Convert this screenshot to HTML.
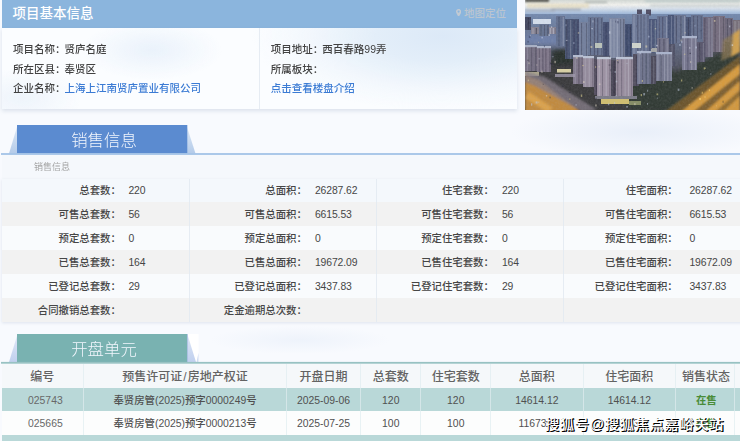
<!DOCTYPE html>
<html lang="zh-CN">
<head>
<meta charset="utf-8">
<title>项目基本信息</title>
<style>
*{box-sizing:border-box;margin:0;padding:0}
html,body{width:740px;height:441px;overflow:hidden;background:#f8fafe}
body{font-family:"Liberation Sans","Noto Sans CJK SC",sans-serif;color:#333;font-size:10.4px;line-height:1}
#root{position:relative;width:740px;height:441px;overflow:hidden;background:radial-gradient(ellipse 130px 26px at 640px 132px,#e9eff9 0%,rgba(248,250,254,0) 100%),radial-gradient(ellipse 90px 14px at 300px 340px,#eef3fb 0%,rgba(248,250,254,0) 100%),#f8fafe}
#in{position:absolute;left:-10px;top:-10px;width:760px;height:461px;filter:blur(0.45px)}
#in2{position:absolute;left:10px;top:10px;width:740px;height:441px}
.abs{position:absolute;white-space:nowrap}
.hdr{left:1.5px;top:0;width:515.5px;height:27.5px;background:#8bb5dd}
.hdr .t{left:11px;top:0;line-height:27px;font-size:13.5px;color:#fff;font-weight:500}
.hdr .map{left:462.5px;top:0;line-height:27px;font-size:10.5px;color:#bbc5d0;font-weight:500}
.panel{left:1.5px;top:27.5px;width:515px;height:81.2px;background:radial-gradient(ellipse 190px 75px at 440px 8px,#dce9f7 0%,#e3eef9 35%,rgba(240,246,252,.6) 75%,rgba(250,252,254,0) 100%),radial-gradient(ellipse 70px 30px at 150px 22px,#eaf2fb 0%,rgba(250,252,254,0) 100%),radial-gradient(ellipse 60px 30px at 20px 70px,#eef4fb 0%,rgba(250,252,254,0) 100%),#fbfdff;box-shadow:0 1.5px 4px rgba(120,140,170,.22)}
.panel .vd{left:257px;top:0;width:1px;height:81px;background:#e6ecf3}
.info{font-size:10.5px;color:#424242;line-height:14px;font-weight:500}
.info i{font-style:normal;margin-right:-0.9px}
.info a{color:#3b7bd4;text-decoration:none}
.tab{left:19px;width:170px;height:28px;color:#f2f6fd;font-size:16.4px;text-align:center;line-height:28px;font-weight:300}
.lab{text-align:right;width:110px}
.row{left:0;width:748px}
.lab,.val{font-size:10.4px;color:#464646;font-weight:500;line-height:24px}
.val{letter-spacing:-0.1px}
.cd{top:0;width:1px;background:rgba(224,236,240,.7)}
.sd{top:0;width:1px;background:rgba(225,232,240,.8)}
.th{font-size:12px;font-weight:500;color:#636363;text-align:center}
.td{font-size:10.4px;color:#505050;text-align:center;font-weight:500}
.g{color:#4a8c38;font-weight:700;position:relative;left:1.5px}
.wm{left:545.2px;top:413.6px;font-size:14px;line-height:20px;color:#fff;font-weight:500;letter-spacing:0.9px;text-shadow:1.1px 1.1px 0.2px #000,0.6px 0.6px 0 #000}
</style>
</head>
<body>
<div id="root"><div id="in"><div id="in2">
  <div class="abs hdr">
    <div class="abs t">项目基本信息</div>
    <svg class="abs" style="left:454px;top:8.5px" width="5.2" height="7.8" viewBox="0 0 12 18"><path d="M6 0C2.7 0 0 2.7 0 6c0 4.5 6 12 6 12s6-7.500 6-12c0-3.300-2.700-6-6-6zm0 8.500A2.500 2.500 0 1 1 6 3.500a2.500 2.500 0 0 1 0 5z" fill="#c2cad3"/></svg>
    <div class="abs map">地图定位</div>
  </div>
  <div class="abs panel">
    <div class="abs vd"></div>
    <div class="abs info" style="left:11.5px;top:14.8px">项目名称<i>：</i>贤庐名庭</div>
    <div class="abs info" style="left:11.5px;top:34.6px">所在区县<i>：</i>奉贤区</div>
    <div class="abs info" style="left:11.5px;top:53.6px">企业名称<i>：</i><a>上海上江南贤庐置业有限公司</a></div>
    <div class="abs info" style="left:269.2px;top:14.8px">项目地址<i>：</i>西百春路99弄</div>
    <div class="abs info" style="left:269.2px;top:34.6px">所属板块<i>：</i></div>
    <div class="abs info" style="left:269.2px;top:53.6px"><a>点击查看楼盘介绍</a></div>
  </div>

  <!-- photo -->
<svg class="abs" style="left:525px;top:0" width="215" height="110" viewBox="0 0 215 110">
<defs>
<linearGradient id="sky" x1="0" y1="0" x2="0" y2="1"><stop offset="0" stop-color="#d2d8d4"/><stop offset="0.3" stop-color="#f2f2ee"/><stop offset="0.55" stop-color="#d4deea"/><stop offset="0.8" stop-color="#a9c0de"/><stop offset="1" stop-color="#8fa6c8"/></linearGradient>
<linearGradient id="city" x1="0" y1="0" x2="0" y2="1"><stop offset="0" stop-color="#748aae"/><stop offset="0.3" stop-color="#626c86"/><stop offset="0.65" stop-color="#4c4b56"/><stop offset="1" stop-color="#343432"/></linearGradient>
<linearGradient id="road" x1="0" y1="0" x2="1" y2="1"><stop offset="0" stop-color="#a8742c"/><stop offset="0.5" stop-color="#d89c40"/><stop offset="1" stop-color="#d09840"/></linearGradient>
<filter id="b0" x="-5%" y="-5%" width="110%" height="110%"><feGaussianBlur stdDeviation="0.6"/></filter>
<filter id="b1" x="-10%" y="-10%" width="120%" height="120%"><feGaussianBlur stdDeviation="1"/></filter>
<filter id="b2" x="-10%" y="-10%" width="120%" height="120%"><feGaussianBlur stdDeviation="2.2"/></filter>
<filter id="nz" x="0" y="0" width="100%" height="100%"><feTurbulence type="fractalNoise" baseFrequency="0.45" numOctaves="2" seed="3" result="n"/><feColorMatrix type="matrix" values="0 0 0 0 0.45  0 0 0 0 0.45  0 0 0 0 0.5  1.4 0 0 0 -0.45"/></filter>
<clipPath id="pc"><rect width="215" height="110"/></clipPath>
</defs>
<g clip-path="url(#pc)">
<rect width="215" height="16" fill="url(#sky)"/>
<rect y="14" width="215" height="96" fill="url(#city)"/>
<g filter="url(#b1)">
<rect x="0" y="-1" width="24" height="3" fill="#505048"/>
<rect x="60" y="1.500" width="22" height="1.500" fill="#8a9490" opacity=".7"/>
<rect x="2" y="3.500" width="62" height="4.500" fill="#e6dcbc" opacity=".7"/>
<rect x="26" y="8.500" width="30" height="2" fill="#7a8494" opacity=".6"/>
<rect x="0" y="9" width="30" height="3" fill="#9aa2b0" opacity=".5"/>
<rect x="125" y="4.500" width="90" height="2" fill="#aab6ba" opacity=".55"/>
<rect x="120" y="0" width="95" height="2" fill="#b4c4c4" opacity=".8"/>
</g>
<g filter="url(#b2)">
<polygon points="100,66 128,60 150,72 178,60 200,50 215,46 215,66 150,112 100,112 92,92" fill="#333a34"/>
<polygon points="0,64 30,58 55,64 62,84 112,112 30,112 0,86" fill="#3a3b3e"/>
<polygon points="26,50 50,48 52,64 28,66" fill="#2a302e"/>
<rect x="186" y="32" width="20" height="22" fill="#4a4c52"/>
<rect x="0" y="34" width="46" height="11" fill="#6e80a8"/>
</g>
<g filter="url(#b0)">
<rect x="0" y="17" width="6" height="13" fill="#424660"/>
<rect x="3" y="18" width="1" height="12" fill="#33354b" opacity=".8"/>
<rect x="8" y="19" width="18" height="5" fill="#d4deec"/>
<rect x="6" y="27" width="40" height="7" fill="#878494"/>
<rect x="7.6" y="28" width="0.8" height="6" fill="#b1b1bf" opacity=".8"/>
<rect x="10.7" y="28" width="1.2" height="6" fill="#484757" opacity=".8"/>
<rect x="14.4" y="28" width="1" height="6" fill="#484757" opacity=".8"/>
<rect x="17.5" y="28" width="1.2" height="6" fill="#484757" opacity=".8"/>
<rect x="21.1" y="28" width="1" height="6" fill="#484757" opacity=".8"/>
<rect x="24.7" y="28" width="1.2" height="6" fill="#b1b1bf" opacity=".8"/>
<rect x="27.8" y="28" width="1.2" height="6" fill="#b1b1bf" opacity=".8"/>
<rect x="30.7" y="28" width="0.8" height="6" fill="#484757" opacity=".8"/>
<rect x="34.4" y="28" width="1" height="6" fill="#b1b1bf" opacity=".8"/>
<rect x="37.6" y="28" width="1.2" height="6" fill="#b1b1bf" opacity=".8"/>
<rect x="40.8" y="28" width="0.8" height="6" fill="#484757" opacity=".8"/>
<rect x="44.5" y="28" width="1" height="6" fill="#484757" opacity=".8"/>
<rect x="14" y="24" width="10" height="12" fill="#667390"/>
<rect x="15.6" y="25" width="0.8" height="11" fill="#484f67" opacity=".8"/>
<rect x="19.2" y="25" width="0.8" height="11" fill="#484f67" opacity=".8"/>
<rect x="22.3" y="25" width="1.2" height="11" fill="#484f67" opacity=".8"/>
<rect x="31" y="16" width="9" height="30" fill="#63708f"/>
<rect x="33.5" y="17" width="1" height="29" fill="#464d66" opacity=".8"/>
<rect x="37.7" y="17" width="1.2" height="29" fill="#8c96ae" opacity=".8"/>
<rect x="40" y="19" width="14" height="40" fill="#4a5473"/>
<rect x="41.4" y="20" width="0.8" height="39" fill="#373d56" opacity=".8"/>
<rect x="45.2" y="20" width="1" height="39" fill="#7a839b" opacity=".8"/>
<rect x="48.7" y="20" width="0.8" height="39" fill="#373d56" opacity=".8"/>
<rect x="52.5" y="20" width="0.8" height="39" fill="#373d56" opacity=".8"/>
<rect x="54" y="22" width="9" height="34" fill="#737f9c"/>
<rect x="56.1" y="23" width="1" height="33" fill="#4f566e" opacity=".8"/>
<rect x="61" y="23" width="0.8" height="33" fill="#4f566e" opacity=".8"/>
<rect x="63" y="17" width="15" height="38" fill="#687493"/>
<rect x="65" y="18" width="1" height="37" fill="#495069" opacity=".8"/>
<rect x="68.9" y="18" width="1.2" height="37" fill="#495069" opacity=".8"/>
<rect x="72.1" y="18" width="1.2" height="37" fill="#495069" opacity=".8"/>
<rect x="76.3" y="18" width="1" height="37" fill="#495069" opacity=".8"/>
<rect x="78" y="22" width="6" height="34" fill="#485373"/>
<rect x="80.7" y="23" width="0.8" height="33" fill="#363d56" opacity=".8"/>
<rect x="84" y="18" width="16" height="40" fill="#7c86a1"/>
<rect x="85.2" y="19" width="1.2" height="39" fill="#9da5bb" opacity=".8"/>
<rect x="88.6" y="19" width="0.8" height="39" fill="#9da5bb" opacity=".8"/>
<rect x="91.7" y="19" width="1.2" height="39" fill="#9da5bb" opacity=".8"/>
<rect x="95.3" y="19" width="0.8" height="39" fill="#555b71" opacity=".8"/>
<rect x="98.2" y="19" width="1.2" height="39" fill="#555b71" opacity=".8"/>
<rect x="100" y="24" width="7" height="32" fill="#455173"/>
<rect x="101.6" y="25" width="0.8" height="31" fill="#353c56" opacity=".8"/>
<rect x="104.9" y="25" width="1.2" height="31" fill="#353c56" opacity=".8"/>
<rect x="112" y="9.5" width="5" height="6" fill="#504e63"/>
<rect x="121" y="9.5" width="5" height="6" fill="#504e63"/>
<rect x="107" y="14" width="17" height="44" fill="#6e7a98"/>
<rect x="108.5" y="15" width="1" height="43" fill="#939db5" opacity=".8"/>
<rect x="112.2" y="15" width="1.2" height="43" fill="#4d546b" opacity=".8"/>
<rect x="115.5" y="15" width="1" height="43" fill="#4d546b" opacity=".8"/>
<rect x="118.6" y="15" width="0.8" height="43" fill="#4d546b" opacity=".8"/>
<rect x="122.6" y="15" width="0.8" height="43" fill="#4d546b" opacity=".8"/>
<rect x="124" y="19" width="8" height="34" fill="#4b5778"/>
<rect x="125.7" y="20" width="1.2" height="33" fill="#7b859e" opacity=".8"/>
<rect x="129.8" y="20" width="1" height="33" fill="#7b859e" opacity=".8"/>
<rect x="132" y="16" width="11" height="24" fill="#657190"/>
<rect x="133.9" y="17" width="0.8" height="23" fill="#474e67" opacity=".8"/>
<rect x="137.2" y="17" width="1" height="23" fill="#474e67" opacity=".8"/>
<rect x="141" y="17" width="1" height="23" fill="#8d97af" opacity=".8"/>
<rect x="143" y="15" width="6" height="30" fill="#485476"/>
<rect x="145.9" y="16" width="1" height="29" fill="#79839d" opacity=".8"/>
<rect x="149" y="15" width="12" height="28" fill="#687390"/>
<rect x="150.8" y="16" width="1.2" height="27" fill="#494f67" opacity=".8"/>
<rect x="155.4" y="16" width="1" height="27" fill="#494f67" opacity=".8"/>
<rect x="159" y="16" width="1.2" height="27" fill="#8f98af" opacity=".8"/>
<rect x="161" y="17" width="5" height="24" fill="#4b5675"/>
<rect x="163.2" y="18" width="0.8" height="23" fill="#383e57" opacity=".8"/>
<rect x="166" y="15" width="12" height="24" fill="#65708d"/>
<rect x="168.2" y="16" width="1" height="23" fill="#474d65" opacity=".8"/>
<rect x="172" y="16" width="0.8" height="23" fill="#474d65" opacity=".8"/>
<rect x="175.8" y="16" width="0.8" height="23" fill="#474d65" opacity=".8"/>
<rect x="178" y="17" width="10" height="40" fill="#6d697e"/>
<rect x="179.3" y="18" width="1" height="39" fill="#4c495c" opacity=".8"/>
<rect x="183.4" y="18" width="1.2" height="39" fill="#9291a3" opacity=".8"/>
<rect x="186.4" y="18" width="1.2" height="39" fill="#9291a3" opacity=".8"/>
<rect x="188" y="16" width="12" height="36" fill="#746d7e"/>
<rect x="189.6" y="17" width="1" height="35" fill="#504c5c" opacity=".8"/>
<rect x="194.2" y="17" width="0.8" height="35" fill="#9794a3" opacity=".8"/>
<rect x="198.1" y="17" width="0.8" height="35" fill="#504c5c" opacity=".8"/>
<rect x="200" y="18" width="8" height="24" fill="#6d677a"/>
<rect x="202.2" y="19" width="0.8" height="23" fill="#4c485a" opacity=".8"/>
<rect x="205.7" y="19" width="1.2" height="23" fill="#4c485a" opacity=".8"/>
<rect x="208" y="20" width="7" height="14" fill="#766e78"/>
<rect x="209.4" y="21" width="1.2" height="13" fill="#98959f" opacity=".8"/>
<rect x="213.4" y="21" width="1" height="13" fill="#98959f" opacity=".8"/>
<rect x="0" y="46" width="12" height="25" fill="#756f82"/>
<rect x="1.9" y="47" width="0.8" height="24" fill="#9895a6" opacity=".8"/>
<rect x="6.3" y="47" width="0.8" height="24" fill="#514d5f" opacity=".8"/>
<rect x="10.3" y="47" width="1.2" height="24" fill="#514d5f" opacity=".8"/>
<rect x="0" y="45" width="12" height="2.200" fill="#a8b0c4"/>
<rect x="12" y="47" width="14" height="25" fill="#80788a"/>
<rect x="13.9" y="48" width="0.8" height="24" fill="#575264" opacity=".8"/>
<rect x="17.3" y="48" width="1.2" height="24" fill="#575264" opacity=".8"/>
<rect x="20.4" y="48" width="1" height="24" fill="#575264" opacity=".8"/>
<rect x="24.4" y="48" width="1.2" height="24" fill="#575264" opacity=".8"/>
<rect x="12" y="46" width="14" height="2.200" fill="#b0b8cc"/>
<rect x="132" y="38" width="12" height="26" fill="#727288"/>
<rect x="134.2" y="39" width="1" height="25" fill="#4e4e62" opacity=".8"/>
<rect x="138.3" y="39" width="1.2" height="25" fill="#4e4e62" opacity=".8"/>
<rect x="141.6" y="39" width="1" height="25" fill="#9597a9" opacity=".8"/>
<rect x="144" y="44" width="6" height="22" fill="#505166"/>
<rect x="146.6" y="45" width="0.8" height="21" fill="#7e8192" opacity=".8"/>
<rect x="157" y="37" width="15" height="33" fill="#77778f"/>
<rect x="158.9" y="38" width="1" height="32" fill="#999baf" opacity=".8"/>
<rect x="162.4" y="38" width="1" height="32" fill="#525266" opacity=".8"/>
<rect x="166.1" y="38" width="1.2" height="32" fill="#999baf" opacity=".8"/>
<rect x="169.9" y="38" width="1.2" height="32" fill="#999baf" opacity=".8"/>
<rect x="157" y="36" width="15" height="2.200" fill="#aab4cc"/>
<rect x="172" y="42" width="8" height="20" fill="#59576c"/>
<rect x="174.3" y="43" width="0.8" height="19" fill="#403f52" opacity=".8"/>
<rect x="177.9" y="43" width="0.8" height="19" fill="#848596" opacity=".8"/>
<rect x="48" y="56" width="10" height="28" fill="#7f778a"/>
<rect x="49.8" y="57" width="0.8" height="27" fill="#9f9bab" opacity=".8"/>
<rect x="53.3" y="57" width="1.2" height="27" fill="#575263" opacity=".8"/>
<rect x="56.7" y="57" width="0.8" height="27" fill="#575263" opacity=".8"/>
<rect x="48" y="55" width="10" height="2.200" fill="#b4bcd0"/>
<rect x="58" y="57" width="11" height="30" fill="#938a9b"/>
<rect x="59.8" y="58" width="0.8" height="29" fill="#aca8b7" opacity=".8"/>
<rect x="63.7" y="58" width="1" height="29" fill="#aca8b7" opacity=".8"/>
<rect x="67.4" y="58" width="1" height="29" fill="#625d6d" opacity=".8"/>
<rect x="58" y="56" width="11" height="2.200" fill="#bcc4d6"/>
<rect x="69" y="59" width="9" height="36" fill="#545061"/>
<rect x="71.1" y="60" width="1" height="35" fill="#3e3b4c" opacity=".8"/>
<rect x="75.7" y="60" width="1.2" height="35" fill="#3e3b4c" opacity=".8"/>
<rect x="72" y="58" width="14" height="40" fill="#9b90a1"/>
<rect x="73.6" y="59" width="1.2" height="39" fill="#b2acbb" opacity=".8"/>
<rect x="77.2" y="59" width="0.8" height="39" fill="#666071" opacity=".8"/>
<rect x="80.6" y="59" width="1.2" height="39" fill="#b2acbb" opacity=".8"/>
<rect x="84.4" y="59" width="1" height="39" fill="#666071" opacity=".8"/>
<rect x="72" y="57" width="14" height="2.200" fill="#c0c8d8"/>
<rect x="86" y="60" width="5" height="38" fill="#4c4859"/>
<rect x="88.6" y="61" width="1.2" height="37" fill="#393647" opacity=".8"/>
<rect x="91" y="58" width="17" height="40" fill="#978c9d"/>
<rect x="92.4" y="59" width="0.8" height="39" fill="#645e6f" opacity=".8"/>
<rect x="96.3" y="59" width="0.8" height="39" fill="#645e6f" opacity=".8"/>
<rect x="99.7" y="59" width="0.8" height="39" fill="#afa9b8" opacity=".8"/>
<rect x="102.9" y="59" width="1.2" height="39" fill="#afa9b8" opacity=".8"/>
<rect x="106.4" y="59" width="0.8" height="39" fill="#645e6f" opacity=".8"/>
<rect x="91" y="57" width="17" height="2.200" fill="#bcc4d6"/>
<rect x="108" y="54" width="6" height="32" fill="#535061"/>
<rect x="111.1" y="55" width="1" height="31" fill="#3d3b4c" opacity=".8"/>
<rect x="112" y="52" width="14" height="32" fill="#70758e"/>
<rect x="113.6" y="53" width="1" height="31" fill="#9599ad" opacity=".8"/>
<rect x="117.3" y="53" width="0.8" height="31" fill="#4e5165" opacity=".8"/>
<rect x="120.6" y="53" width="1.2" height="31" fill="#4e5165" opacity=".8"/>
<rect x="124.6" y="53" width="0.8" height="31" fill="#4e5165" opacity=".8"/>
<rect x="112" y="51" width="14" height="2.200" fill="#aab4cc"/>
<rect x="126" y="56" width="5" height="28" fill="#4b495a"/>
<rect x="128.4" y="57" width="0.8" height="27" fill="#7a7b8a" opacity=".8"/>
<rect x="131" y="53" width="16" height="28" fill="#75788f"/>
<rect x="132.3" y="54" width="1.2" height="27" fill="#989caf" opacity=".8"/>
<rect x="135.7" y="54" width="0.8" height="27" fill="#515266" opacity=".8"/>
<rect x="139.1" y="54" width="1" height="27" fill="#989caf" opacity=".8"/>
<rect x="142.2" y="54" width="1.2" height="27" fill="#989caf" opacity=".8"/>
<rect x="145.6" y="54" width="1" height="27" fill="#989caf" opacity=".8"/>
<rect x="131" y="52" width="16" height="2.200" fill="#aab4cc"/>
<rect x="32" y="69" width="14" height="3.5" fill="#d8d0a4" opacity="1"/>
<rect x="30" y="74" width="20" height="3" fill="#a09aac" opacity="0.8"/>
<rect x="76" y="99" width="28" height="5" fill="#d0be70" opacity="1"/>
<rect x="70" y="96" width="42" height="3" fill="#7c7c88" opacity="1"/>
<rect x="104" y="101" width="12" height="4" fill="#98a070" opacity="0.8"/>
<rect x="107" y="43" width="9" height="5" fill="#d0d4cc" opacity="1"/>
<rect x="70" y="43" width="7" height="5" fill="#c4ccc0" opacity="0.9"/>
<rect x="126" y="48" width="6" height="4" fill="#b8b8b0" opacity="0.8"/>
<rect x="0" y="72" width="14" height="4" fill="#c8c0a0" opacity="0.8"/>
</g>
<g filter="url(#b1)">
<polygon points="215,56 215,112 140,112" fill="url(#road)"/>
<polygon points="215,56 215,64 156,112 140,112" fill="#5a4a2c" opacity=".85"/>
<polygon points="215,74 215,81 180,112 168,112" fill="#6e5630" opacity=".85"/>
<polygon points="215,90 215,96 198,112 190,112" fill="#806030" opacity=".8"/>
<polygon points="208,34 215,29 215,52 206,57" fill="#cfa050"/>
<polygon points="198,40 208,34 206,57 196,61" fill="#8a7850" opacity=".7"/>
<polygon points="0,75 14,80 56,112 0,112" fill="#c08a40"/>
<polygon points="0,71 20,77 72,110 58,112 10,86 0,82" fill="#857c88" opacity=".75"/>
<polygon points="4,92 28,108 22,112 0,98" fill="#e0a850" opacity=".8"/>
</g>
<g filter="url(#b0)">
<rect x="70.2" y="104.4" width="1.5" height="2.1" fill="#d8d0c0" opacity=".55"/>
<rect x="137.9" y="81.2" width="1" height="1.4" fill="#e8d890" opacity=".55"/>
<rect x="18.9" y="45.3" width="1.1" height="1.9" fill="#3c4460" opacity=".55"/>
<rect x="3.4" y="62.4" width="1.2" height="1.7" fill="#d8d0c0" opacity=".55"/>
<rect x="165.2" y="60.9" width="1" height="2.2" fill="#d8d0c0" opacity=".55"/>
<rect x="92.2" y="21.1" width="1.5" height="2.3" fill="#3c4460" opacity=".55"/>
<rect x="101.2" y="106" width="1.7" height="1.6" fill="#c0c8dc" opacity=".55"/>
<rect x="204.1" y="25.6" width="1.2" height="1.7" fill="#dfe6f4" opacity=".55"/>
<rect x="178.7" y="67.4" width="1.3" height="2.1" fill="#e8d890" opacity=".55"/>
<rect x="120.4" y="45.4" width="1.8" height="2.2" fill="#e8d8b0" opacity=".55"/>
<rect x="131" y="44.8" width="1.8" height="1.6" fill="#dfe6f4" opacity=".55"/>
<rect x="123.2" y="35.7" width="1.3" height="1.8" fill="#c8d4ec" opacity=".55"/>
<rect x="6" y="103.3" width="1.3" height="2.4" fill="#c0c8dc" opacity=".55"/>
<rect x="26.2" y="26.2" width="0.9" height="1.7" fill="#dfe6f4" opacity=".55"/>
<rect x="89" y="102.2" width="1.1" height="1.6" fill="#c0c8dc" opacity=".55"/>
<rect x="27.3" y="56.2" width="1.3" height="1" fill="#c0c8dc" opacity=".55"/>
<rect x="90.2" y="20.6" width="0.9" height="2" fill="#3c4460" opacity=".55"/>
<rect x="4.9" y="35.1" width="0.8" height="1.3" fill="#dfe6f4" opacity=".55"/>
<rect x="155.6" y="39.5" width="0.9" height="2" fill="#e8d8b0" opacity=".55"/>
<rect x="26.4" y="62.9" width="1.5" height="1.9" fill="#2c2c38" opacity=".55"/>
<rect x="188.9" y="20" width="1.6" height="1.8" fill="#e8d8b0" opacity=".55"/>
<rect x="115.7" y="94" width="1.3" height="2.2" fill="#e8d890" opacity=".55"/>
<rect x="131.5" y="93.4" width="1.7" height="1.8" fill="#e8d890" opacity=".55"/>
<rect x="74.7" y="33.9" width="1.7" height="1.1" fill="#3c4460" opacity=".55"/>
<rect x="167.3" y="35.1" width="0.9" height="1.2" fill="#c8d4ec" opacity=".55"/>
<rect x="156.2" y="40.8" width="1.2" height="2.3" fill="#c8d4ec" opacity=".55"/>
<rect x="116.8" y="80" width="1.2" height="1.9" fill="#e8d890" opacity=".55"/>
<rect x="3.8" y="35.7" width="1.7" height="2.3" fill="#3c4460" opacity=".55"/>
<rect x="24.8" y="62.5" width="1.3" height="1.9" fill="#2c2c38" opacity=".55"/>
<rect x="40.6" y="24.2" width="0.8" height="2" fill="#c8d4ec" opacity=".55"/>
<rect x="131.9" y="97.6" width="0.9" height="1.1" fill="#c0c8dc" opacity=".55"/>
<rect x="43.8" y="91.9" width="1.7" height="1" fill="#2c2c38" opacity=".55"/>
<rect x="13.3" y="101.7" width="0.9" height="1" fill="#c0c8dc" opacity=".55"/>
<rect x="84" y="55.5" width="1.2" height="1.8" fill="#2c2c38" opacity=".55"/>
<rect x="2.8" y="79.7" width="1" height="1.5" fill="#e8d890" opacity=".55"/>
<rect x="159" y="53.7" width="1.4" height="1" fill="#e8d890" opacity=".55"/>
<rect x="170.4" y="46.5" width="1.6" height="1.9" fill="#c8d4ec" opacity=".55"/>
<rect x="185.1" y="73.4" width="1.4" height="1.1" fill="#c0c8dc" opacity=".55"/>
<rect x="125.7" y="48" width="1.1" height="1" fill="#3c4460" opacity=".55"/>
<rect x="159.7" y="32.1" width="0.9" height="1.3" fill="#e8d8b0" opacity=".55"/>
<rect x="115.9" y="50.5" width="1.6" height="1.4" fill="#c0c8dc" opacity=".55"/>
<rect x="155.4" y="24.2" width="1.1" height="1" fill="#3c4460" opacity=".55"/>
<rect x="190.9" y="105.2" width="0.8" height="1.2" fill="#f8c860" opacity=".55"/>
<rect x="206.7" y="44.3" width="1.5" height="1.7" fill="#dfe6f4" opacity=".55"/>
<rect x="114.6" y="52.3" width="1.4" height="1.9" fill="#c0c8dc" opacity=".55"/>
<rect x="163.8" y="104.2" width="0.9" height="1" fill="#ffd878" opacity=".55"/>
<rect x="51" y="57" width="1.6" height="1.8" fill="#d8d0c0" opacity=".55"/>
<rect x="2.3" y="40.8" width="1.7" height="1.7" fill="#3c4460" opacity=".55"/>
<rect x="109.2" y="103.1" width="1.4" height="2.1" fill="#d8d0c0" opacity=".55"/>
<rect x="16.4" y="70.6" width="1.2" height="2.3" fill="#d8d0c0" opacity=".55"/>
<rect x="83" y="103.4" width="1.3" height="1.8" fill="#c0c8dc" opacity=".55"/>
<rect x="92.4" y="61.5" width="1.3" height="1.8" fill="#2c2c38" opacity=".55"/>
<rect x="78.6" y="43.1" width="1.4" height="1.3" fill="#3c4460" opacity=".55"/>
<rect x="154.1" y="44.1" width="1.6" height="1.7" fill="#c8d4ec" opacity=".55"/>
<rect x="136.1" y="54" width="0.9" height="1.3" fill="#c0c8dc" opacity=".55"/>
<rect x="85.5" y="69.2" width="0.9" height="2.2" fill="#2c2c38" opacity=".55"/>
<rect x="92.3" y="60" width="0.8" height="1" fill="#e8d890" opacity=".55"/>
<rect x="174.2" y="98" width="1.8" height="2.1" fill="#ffd878" opacity=".55"/>
<rect x="129.8" y="28.1" width="1.3" height="1.1" fill="#e8d8b0" opacity=".55"/>
<rect x="11.2" y="64.5" width="1.2" height="1" fill="#d8d0c0" opacity=".55"/>
<rect x="89.6" y="70.9" width="1.2" height="2" fill="#c0c8dc" opacity=".55"/>
<rect x="175.3" y="30.1" width="1.5" height="1.2" fill="#3c4460" opacity=".55"/>
<rect x="24.5" y="96.6" width="1.1" height="1.8" fill="#2c2c38" opacity=".55"/>
<rect x="155.9" y="79.5" width="1.4" height="2" fill="#e8d890" opacity=".55"/>
<rect x="40.8" y="39.9" width="1.7" height="0.9" fill="#dfe6f4" opacity=".55"/>
<rect x="13.1" y="41.8" width="0.8" height="0.9" fill="#e8d8b0" opacity=".55"/>
<rect x="47.9" y="42.5" width="1.7" height="1.1" fill="#c8d4ec" opacity=".55"/>
<rect x="50.5" y="104.4" width="1.3" height="1.1" fill="#c0c8dc" opacity=".55"/>
<rect x="73.9" y="83.5" width="1.6" height="1.5" fill="#d8d0c0" opacity=".55"/>
<rect x="176.7" y="91.7" width="1.2" height="2" fill="#ffd878" opacity=".55"/>
<rect x="83.9" y="31.3" width="1.5" height="2.4" fill="#dfe6f4" opacity=".55"/>
<rect x="70" y="66.3" width="1.2" height="1.4" fill="#e8d890" opacity=".55"/>
<rect x="20.9" y="95" width="1.3" height="1.5" fill="#d8d0c0" opacity=".55"/>
<rect x="122.1" y="89.7" width="1.1" height="2" fill="#c0c8dc" opacity=".55"/>
<rect x="16.4" y="36.8" width="1.5" height="1.6" fill="#c8d4ec" opacity=".55"/>
<rect x="164.3" y="46.9" width="1" height="1.9" fill="#dfe6f4" opacity=".55"/>
<rect x="70.3" y="97.8" width="1.5" height="1.7" fill="#2c2c38" opacity=".55"/>
<rect x="197.5" y="100.7" width="1.2" height="2.1" fill="#5a4420" opacity=".55"/>
<rect x="65.5" y="46" width="1.8" height="2" fill="#e8d8b0" opacity=".55"/>
<rect x="111" y="25.4" width="0.8" height="1.9" fill="#3c4460" opacity=".55"/>
<rect x="125.7" y="88.1" width="1.6" height="1.7" fill="#2c2c38" opacity=".55"/>
<rect x="179.8" y="67.5" width="0.9" height="1.5" fill="#e8d890" opacity=".55"/>
<rect x="183.8" y="89.4" width="1.3" height="1.7" fill="#ffd878" opacity=".55"/>
<rect x="122" y="103" width="0.9" height="1.7" fill="#c0c8dc" opacity=".55"/>
<rect x="169.4" y="25.4" width="1.1" height="1" fill="#c8d4ec" opacity=".55"/>
<rect x="67.5" y="20.3" width="0.9" height="2.1" fill="#dfe6f4" opacity=".55"/>
<rect x="90.7" y="80.7" width="1.6" height="1.6" fill="#c0c8dc" opacity=".55"/>
<rect x="164.4" y="52.7" width="1.6" height="1.3" fill="#2c2c38" opacity=".55"/>
<rect x="29.4" y="60.9" width="1.5" height="2.3" fill="#d8d0c0" opacity=".55"/>
<rect x="88.3" y="90.7" width="1.7" height="2.1" fill="#2c2c38" opacity=".55"/>
<rect x="179.3" y="96.2" width="1.4" height="1.6" fill="#f8c860" opacity=".55"/>
<rect x="152.7" y="88.6" width="1.7" height="2.3" fill="#c0c8dc" opacity=".55"/>
<rect x="52.8" y="32.3" width="1.5" height="1.3" fill="#e8d8b0" opacity=".55"/>
<rect x="83.7" y="64.6" width="1.8" height="0.9" fill="#2c2c38" opacity=".55"/>
<rect x="66.3" y="28.1" width="1.6" height="1.1" fill="#dfe6f4" opacity=".55"/>
<rect x="13.4" y="58.4" width="1.7" height="0.9" fill="#c0c8dc" opacity=".55"/>
<rect x="23.4" y="34.2" width="1.4" height="1.8" fill="#dfe6f4" opacity=".55"/>
<rect x="101.5" y="62.8" width="1" height="1.2" fill="#c0c8dc" opacity=".55"/>
<rect x="37.1" y="84.7" width="1.4" height="2.3" fill="#2c2c38" opacity=".55"/>
<rect x="118.3" y="93.1" width="1.7" height="2.3" fill="#c0c8dc" opacity=".55"/>
<rect x="73.5" y="66.2" width="1.3" height="1.2" fill="#d8d0c0" opacity=".55"/>
<rect x="10.7" y="101.4" width="1.8" height="2.1" fill="#c0c8dc" opacity=".55"/>
<rect x="166.4" y="87.3" width="1.5" height="1.2" fill="#d8d0c0" opacity=".55"/>
<rect x="2.3" y="59.6" width="1.3" height="1.2" fill="#2c2c38" opacity=".55"/>
<rect x="90.6" y="95" width="1" height="1.3" fill="#c0c8dc" opacity=".55"/>
<rect x="55.8" y="94.5" width="1.4" height="2.4" fill="#e8d890" opacity=".55"/>
<rect x="57.3" y="65" width="1.4" height="1.1" fill="#e8d890" opacity=".55"/>
<rect x="43.9" y="98.6" width="1.6" height="0.9" fill="#e8d890" opacity=".55"/>
<rect x="58" y="81.1" width="1.7" height="1.9" fill="#d8d0c0" opacity=".55"/>
<rect x="17.8" y="83.9" width="0.8" height="1.1" fill="#2c2c38" opacity=".55"/>
</g>
<rect width="215" height="110" filter="url(#nz)" opacity=".16"/>
</g>
</svg>

  <svg class="abs" style="left:0;top:124px" width="740" height="32" viewBox="0 0 740 32">
    <defs>
      <linearGradient id="tg1" x1="0" y1="0" x2="0" y2="1"><stop offset="0" stop-color="#dbe7f6"/><stop offset="1" stop-color="#b4cbe9"/></linearGradient>
    </defs>
    <polygon points="9,29.5 17,3 17,29.5" fill="url(#tg1)"/>
    <polygon points="187,3 195.5,29.5 187,29.5" fill="url(#tg1)"/>
    <rect x="17" y="1" width="170.300" height="28.500" fill="#5b8bd0"/>
    <rect x="1" y="29.100" width="739" height="1.800" fill="#a2c3e7"/>
  </svg>
  <div class="abs tab" style="top:125.7px">销售信息</div>
  <div class="abs" style="left:1.5px;top:155px;width:748px;height:24px;background:#f5f8fc"></div>
  <div class="abs" style="left:34px;top:161px;font-size:9px;line-height:12px;color:#a4a4a4">销售信息</div>

  <div class="abs sale" style="left:1.5px;top:178.5px;width:748px;height:143.1px;box-shadow:0 1px 3px rgba(120,140,170,.2)">
    <div class="abs row" style="top:0px;height:23.95px;background:#f4f8fc"></div>
    <div class="abs row" style="top:23.85px;height:23.95px;background:#f2f2f2"></div>
    <div class="abs row" style="top:47.7px;height:23.95px;background:#f9fbfd"></div>
    <div class="abs row" style="top:71.55px;height:23.95px;background:#f2f2f2"></div>
    <div class="abs row" style="top:95.4px;height:23.95px;background:#f9fbfd"></div>
    <div class="abs row" style="top:119.25px;height:23.95px;background:#f2f2f2"></div>
    <div class="abs sd" style="left:187px;height:143.1px"></div>
    <div class="abs sd" style="left:374px;height:143.1px"></div>
    <div class="abs sd" style="left:561px;height:143.1px"></div>
    <div class="abs lab" style="left:9.4px;top:0.2px">总套数：</div><div class="abs val" style="left:126.9px;top:0.2px">220</div>
    <div class="abs lab" style="left:9.4px;top:24.2px">可售总套数：</div><div class="abs val" style="left:126.9px;top:24.2px">56</div>
    <div class="abs lab" style="left:9.4px;top:48.2px">预定总套数：</div><div class="abs val" style="left:126.9px;top:48.2px">0</div>
    <div class="abs lab" style="left:9.4px;top:72.2px">已售总套数：</div><div class="abs val" style="left:126.9px;top:72.2px">164</div>
    <div class="abs lab" style="left:9.4px;top:96.2px">已登记总套数：</div><div class="abs val" style="left:126.9px;top:96.2px">29</div>
    <div class="abs lab" style="left:9.4px;top:120.2px">合同撤销总套数：</div>
    <div class="abs lab" style="left:195.4px;top:0.2px">总面积：</div><div class="abs val" style="left:313.4px;top:0.2px">26287.62</div>
    <div class="abs lab" style="left:195.4px;top:24.2px">可售总面积：</div><div class="abs val" style="left:313.4px;top:24.2px">6615.53</div>
    <div class="abs lab" style="left:195.4px;top:48.2px">预定总面积：</div><div class="abs val" style="left:313.4px;top:48.2px">0</div>
    <div class="abs lab" style="left:195.4px;top:72.2px">已售总面积：</div><div class="abs val" style="left:313.4px;top:72.2px">19672.09</div>
    <div class="abs lab" style="left:195.4px;top:96.2px">已登记总面积：</div><div class="abs val" style="left:313.4px;top:96.2px">3437.83</div>
    <div class="abs lab" style="left:195.4px;top:120.2px">定金逾期总次数：</div>
    <div class="abs lab" style="left:382.4px;top:0.2px">住宅套数：</div><div class="abs val" style="left:500.4px;top:0.2px">220</div>
    <div class="abs lab" style="left:382.4px;top:24.2px">可售住宅套数：</div><div class="abs val" style="left:500.4px;top:24.2px">56</div>
    <div class="abs lab" style="left:382.4px;top:48.2px">预定住宅套数：</div><div class="abs val" style="left:500.4px;top:48.2px">0</div>
    <div class="abs lab" style="left:382.4px;top:72.2px">已售住宅套数：</div><div class="abs val" style="left:500.4px;top:72.2px">164</div>
    <div class="abs lab" style="left:382.4px;top:96.2px">已登记住宅套数：</div><div class="abs val" style="left:500.4px;top:96.2px">29</div>
    <div class="abs lab" style="left:566.2px;top:0.2px">住宅面积：</div><div class="abs val" style="left:687.9px;top:0.2px">26287.62</div>
    <div class="abs lab" style="left:566.2px;top:24.2px">可售住宅面积：</div><div class="abs val" style="left:687.9px;top:24.2px">6615.53</div>
    <div class="abs lab" style="left:566.2px;top:48.2px">预定住宅面积：</div><div class="abs val" style="left:687.9px;top:48.2px">0</div>
    <div class="abs lab" style="left:566.2px;top:72.2px">已售住宅面积：</div><div class="abs val" style="left:687.9px;top:72.2px">19672.09</div>
    <div class="abs lab" style="left:566.2px;top:96.2px">已登记住宅面积：</div><div class="abs val" style="left:687.9px;top:96.2px">3437.83</div>
  </div>

  <svg class="abs" style="left:0;top:333.2px" width="740" height="32" viewBox="0 0 740 32">
    <defs>
      <linearGradient id="tg2" x1="0" y1="0" x2="0" y2="1"><stop offset="0" stop-color="#dfe7f7"/><stop offset="1" stop-color="#c0d0ee"/></linearGradient>
    </defs>
    <rect x="187.300" y="1" width="11.200" height="28" fill="#fff"/>
    <polygon points="9,29 17,3 17,29" fill="url(#tg2)"/>
    <polygon points="187.300,1 196,29 187.300,29" fill="url(#tg2)"/>
    <polygon points="198.500,20 198.500,29 196.500,29" fill="#d0dcf2"/>
    <rect x="17" y="1" width="170" height="28.500" fill="#79b2b1"/>
    <rect x="187" y="1" width="0.600" height="28" fill="#8caad6"/>
    <rect x="1" y="28.900" width="739" height="1.800" fill="#98c2c2"/>
  </svg>
  <div class="abs tab" style="top:334.9px">开盘单元</div>

  <div class="abs" id="tbl" style="left:1.5px;top:363.8px;width:748px;height:80px">
    <div class="abs" style="left:0;top:0;width:748px;height:24.3px;background:#f5f8fa"></div>
    <div class="abs" style="left:0;top:24.1px;width:748px;height:23.2px;background:#b9d8d8"></div>
    <div class="abs" style="left:0;top:47.3px;width:748px;height:24.3px;background:#fcfdfd"></div>
    <div class="abs" style="left:0;top:71.6px;width:748px;height:8px;background:#b9d8d8"></div>
    <div class="abs cd" style="left:81.75px;height:71.6px"></div>
    <div class="abs cd" style="left:284.25px;height:71.6px"></div>
    <div class="abs cd" style="left:358.75px;height:71.6px"></div>
    <div class="abs cd" style="left:418.75px;height:71.6px"></div>
    <div class="abs cd" style="left:488.75px;height:71.6px"></div>
    <div class="abs cd" style="left:581px;height:71.6px"></div>
    <div class="abs cd" style="left:673.75px;height:71.6px"></div>
    <div class="abs cd" style="left:732px;height:71.6px"></div>
    <div class="abs th" style="left:-0.5px;width:82.75px;top:0;line-height:27.6px">编号</div>
    <div class="abs td" style="left:2.5px;width:82.75px;top:24.1px;line-height:25.6px;color:#686868;font-weight:400">025743</div>
    <div class="abs td" style="left:2.5px;width:82.75px;top:47.3px;line-height:26.6px;color:#686868;font-weight:400">025665</div>
    <div class="abs th" style="left:82.25px;width:202.5px;top:0;line-height:27.6px">预售许可证<span style="margin:0 1px">/</span>房地产权证</div>
    <div class="abs td" style="left:82.25px;width:202.5px;top:24.1px;line-height:25.6px">奉贤房管(2025)预字0000249号</div>
    <div class="abs td" style="left:82.25px;width:202.5px;top:47.3px;line-height:26.6px">奉贤房管(2025)预字0000213号</div>
    <div class="abs th" style="left:284.75px;width:74.5px;top:0;line-height:27.6px">开盘日期</div>
    <div class="abs td" style="left:284.75px;width:74.5px;top:24.1px;line-height:25.6px">2025-09-06</div>
    <div class="abs td" style="left:284.75px;width:74.5px;top:47.3px;line-height:26.6px">2025-07-25</div>
    <div class="abs th" style="left:359.25px;width:60px;top:0;line-height:27.6px">总套数</div>
    <div class="abs td" style="left:359.25px;width:60px;top:24.1px;line-height:25.6px">120</div>
    <div class="abs td" style="left:359.25px;width:60px;top:47.3px;line-height:26.6px">100</div>
    <div class="abs th" style="left:419.25px;width:70px;top:0;line-height:27.6px">住宅套数</div>
    <div class="abs td" style="left:419.25px;width:70px;top:24.1px;line-height:25.6px">120</div>
    <div class="abs td" style="left:419.25px;width:70px;top:47.3px;line-height:26.6px">100</div>
    <div class="abs th" style="left:489.25px;width:92.25px;top:0;line-height:27.6px">总面积</div>
    <div class="abs td" style="left:489.25px;width:92.25px;top:24.1px;line-height:25.6px">14614.12</div>
    <div class="abs td" style="left:489.25px;width:92.25px;top:47.3px;line-height:26.6px">11673.5</div>
    <div class="abs th" style="left:581.5px;width:92.75px;top:0;line-height:27.6px">住宅面积</div>
    <div class="abs td" style="left:581.5px;width:92.75px;top:24.1px;line-height:25.6px">14614.12</div>
    <div class="abs td" style="left:581.5px;width:92.75px;top:47.3px;line-height:26.6px">11673.5</div>
    <div class="abs th" style="left:675.5px;width:58.25px;top:0;line-height:27.6px">销售状态</div>
    <div class="abs td" style="left:674.25px;width:58.25px;top:24.1px;line-height:25.6px"><span class="g">在售</span></div>
    <div class="abs td" style="left:674.25px;width:58.25px;top:47.3px;line-height:26.6px"><span class="g">在售</span></div>
  </div>

  <div class="abs wm">搜狐号@搜狐焦点嘉峪关站</div>
</div></div></div>
</body>
</html>
